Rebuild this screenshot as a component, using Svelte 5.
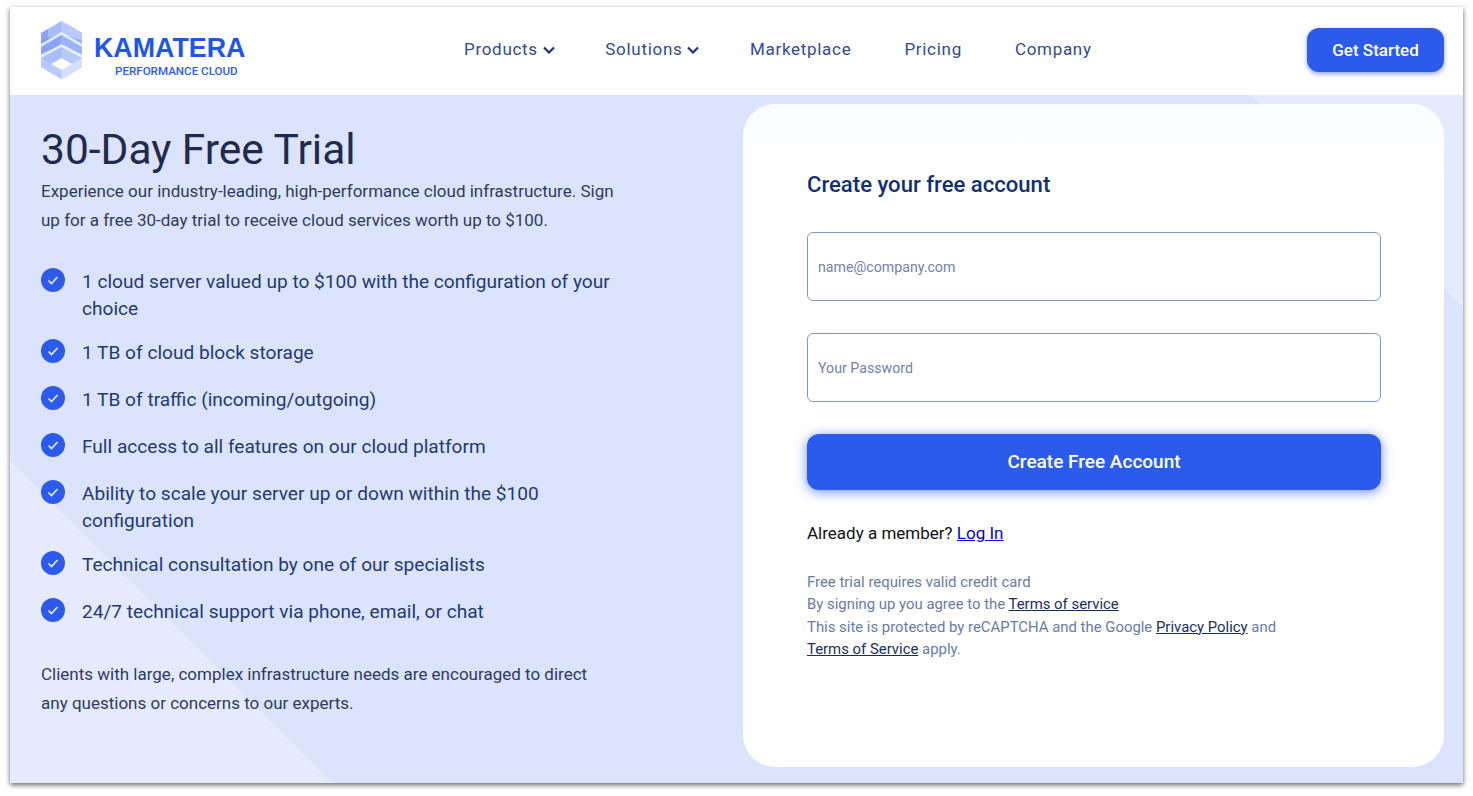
<script lang="ts">
	const navItems = [
		{ label: 'Products', caret: true },
		{ label: 'Solutions', caret: true },
		{ label: 'Marketplace', caret: false },
		{ label: 'Pricing', caret: false },
		{ label: 'Company', caret: false }
	];

	const perks = [
		'1 cloud server valued up to $100 with the configuration of your choice',
		'1 TB of cloud block storage',
		'1 TB of traffic (incoming/outgoing)',
		'Full access to all features on our cloud platform',
		'Ability to scale your server up or down within the $100 configuration',
		'Technical consultation by one of our specialists',
		'24/7 technical support via phone, email, or chat'
	];
</script>

<div class="page">
	<div class="frame">
		<header class="header">
			<a class="logo" href="#top">
				<svg class="logo-mark" viewBox="0 0 41 58" width="41" height="58" aria-hidden="true">
					<polygon points="20.5,0 41,12 41,46 20.5,58 0,46 0,12" fill="#a9bdfa" />
					<polygon points="20.5,0 41,12 41,46 20.5,58" fill="#b8c9fb" />
					<polygon points="0,19 20.5,13 20.5,25 0,33" fill="#8aa5f7" />
					<polygon points="41,19 20.5,13 20.5,25 41,33" fill="#9bb3f9" />
					<polygon points="0,12 7,8 7,22 0,26" fill="#7f9cf6" opacity="0.7" />
					<polygon points="0,23 20.5,11 41,23 41,26 20.5,14 0,26" fill="#fff" opacity="0.75" />
					<polygon points="0,34 20.5,23 41,34 41,37 20.5,26 0,37" fill="#fff" opacity="0.75" />
					<polygon points="0,37 10,43 20.5,49 31,43 41,37 41,46 20.5,58 0,46" fill="#b9cafc" />
					<polygon points="20.5,49 31,43 41,37 41,46 20.5,58" fill="#d6e0fe" />
					<polygon points="20.5,37 31,43 20.5,49 10,43" fill="#fff" />
				</svg>
				<span class="logo-text">
					<span class="logo-name">KAMATERA</span>
					<span class="logo-tag">PERFORMANCE CLOUD</span>
				</span>
			</a>

			<nav class="nav">
				{#each navItems as item}
					<a class="nav-link" href="#top">
						{item.label}
						{#if item.caret}
							<svg class="caret" viewBox="0 0 12 8" width="12" height="8" aria-hidden="true">
								<path d="M1 1.5 6 6.5l5-5" fill="none" stroke="#1d3272" stroke-width="2.2" />
							</svg>
						{/if}
					</a>
				{/each}
			</nav>

			<button class="btn btn-small" type="button">Get Started</button>
		</header>

		<main class="hero">
			<section class="intro">
				<h1>30-Day Free Trial</h1>
				<p class="lead">
					Experience our industry-leading, high-performance cloud infrastructure. Sign up for a free
					30-day trial to receive cloud services worth up to $100.
				</p>

				<ul class="perks">
					{#each perks as perk}
						<li>
							<svg class="check" viewBox="0 0 24 24" width="24" height="24" aria-hidden="true">
								<circle cx="12" cy="12" r="12" fill="#2c5bec" />
								<path d="M7.5 12.5 10.5 15.5 16.5 9" fill="none" stroke="#e8edff" stroke-width="1.6" />
							</svg>
							<span>{perk}</span>
						</li>
					{/each}
				</ul>

				<p class="lead closing">
					Clients with large, complex infrastructure needs are encouraged to direct any questions or
					concerns to our experts.
				</p>
			</section>

			<section class="card">
				<h2>Create your free account</h2>
				<form class="form" on:submit|preventDefault>
					<input type="email" placeholder="name@company.com" />
					<input type="password" placeholder="Your Password" />
					<button class="btn btn-large" type="submit">Create Free Account</button>
				</form>
				<p class="member">Already a member? <a href="#top">Log In</a></p>
				<p class="fine">
					Free trial requires valid credit card<br />
					By signing up you agree to the <a href="#top">Terms of service</a><br />
					This site is protected by reCAPTCHA and the Google <a href="#top">Privacy Policy</a> and<br />
					<a href="#top">Terms of Service</a> apply.
				</p>
			</section>
		</main>
	</div>
</div>

<style>
	:global(body) {
		background: #fff;
		font-family: Roboto, sans-serif;
	}

	.page {
		padding: 7px 10px 13px;
	}

	.frame {
		display: flex;
		flex-direction: column;
		height: 776px;
		box-shadow: 0 2px 5px rgba(0, 0, 0, 0.6);
		overflow: hidden;
	}

	.header {
		display: flex;
		align-items: center;
		height: 88px;
		flex: none;
		padding: 0 19px 2px 31px;
		background: #fff;
		box-sizing: border-box;
	}

	.logo {
		display: flex;
		align-items: center;
		gap: 12px;
		width: 204px;
		text-decoration: none;
	}

	.logo-mark {
		flex: none;
	}

	.logo-text {
		display: flex;
		flex-direction: column;
		margin-top: 12px;
	}

	.logo-name {
		font-family: 'Liberation Sans', Arial, sans-serif;
		font-size: 26.8px;
		font-weight: 700;
		line-height: 28px;
		color: #1f55e8;
	}

	.logo-tag {
		margin: 2px 0 0 21px;
		font-size: 11.6px;
		font-weight: 500;
		line-height: 14px;
		white-space: nowrap;
		color: #2b5ced;
	}

	.nav {
		display: flex;
		gap: 50.5px;
		margin-left: 219px;
		padding-bottom: 2px;
	}

	.nav-link {
		display: flex;
		align-items: center;
		gap: 5px;
		font-size: 17px;
		letter-spacing: 0.7px;
		color: #34498f;
		text-decoration: none;
	}

	.nav-link:nth-child(n + 3) {
		margin-right: 2.5px;
	}

	.caret {
		margin-top: 2px;
	}

	.btn {
		border: none;
		background: #2c5bec;
		color: #fff;
		font-family: inherit;
		font-weight: 500;
		cursor: pointer;
	}

	.btn-small {
		margin-left: auto;
		width: 137px;
		height: 44px;
		border-radius: 12px;
		font-size: 17px;
		box-shadow: 0 2px 5px rgba(45, 91, 239, 0.55);
	}

	.hero {
		flex: 1;
		display: flex;
		justify-content: space-between;
		padding: 9px 19px 16px 31px;
		background:
			linear-gradient(45deg, #e5eaff 228px, transparent 228px),
			linear-gradient(225deg, #e5eaff 150px, transparent 150px),
			#dce3fd;
	}

	.intro {
		width: 576px;
		padding-top: 18px;
	}

	h1 {
		margin: 0;
		font-size: 42.5px;
		font-weight: 400;
		line-height: 55px;
		color: #1f2a4d;
	}

	.lead {
		margin: 0;
		font-size: 17px;
		line-height: 29px;
		color: #2f3a60;
	}

	.perks {
		display: flex;
		flex-direction: column;
		gap: 17px;
		margin: 33px 0 0;
		padding: 0;
		list-style: none;
	}

	.perks li {
		display: flex;
		gap: 17px;
		min-height: 30px;
		font-size: 19.1px;
		line-height: 27px;
		color: #243a72;
	}

	.check {
		flex: none;
	}

	.closing {
		margin-top: 32px;
	}

	.card {
		width: 701px;
		padding: 64px 63px 0 64px;
		border-radius: 32px;
		background: linear-gradient(#fbfcff, #fff 70px);
		box-sizing: border-box;
	}

	h2 {
		margin: 0;
		font-size: 22.1px;
		font-weight: 500;
		line-height: 32px;
		color: #132f70;
	}

	.form {
		display: flex;
		flex-direction: column;
		gap: 32px;
		margin-top: 32px;
	}

	input {
		height: 69px;
		padding: 1px 10px 0;
		border: 1px solid #8594c6;
		border-radius: 6px;
		background: #fff;
		font-family: inherit;
		font-size: 14.2px;
		box-sizing: border-box;
	}

	input::placeholder {
		color: #7282ad;
		opacity: 1;
	}

	.btn-large {
		height: 56px;
		padding-bottom: 2px;
		border-radius: 12px;
		font-size: 19px;
		font-weight: 500;
		box-shadow: 0 2px 12px rgba(45, 91, 239, 0.7);
	}

	.member {
		margin: 31px 0 0;
		font-size: 17px;
		line-height: 24px;
		color: #111;
	}

	.member a {
		color: #0000ee;
	}

	.fine {
		margin: 26px 0 0;
		font-size: 14.9px;
		line-height: 22.3px;
		color: #6b7aa5;
	}

	.fine a {
		color: #1b2c5e;
	}
</style>
